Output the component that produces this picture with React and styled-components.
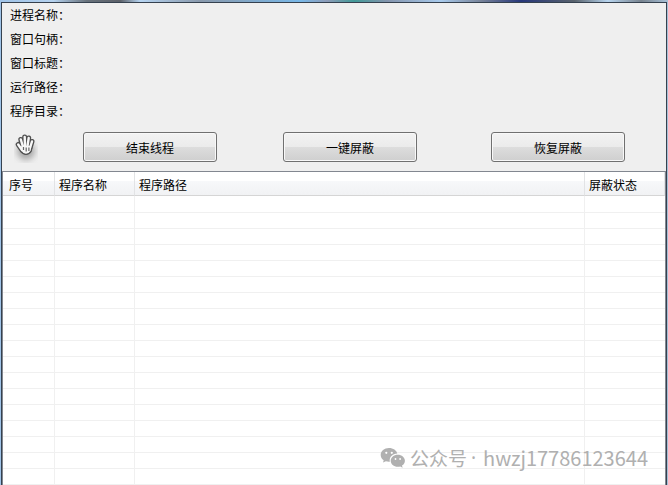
import styled, { createGlobalStyle } from 'styled-components';

const fields = ['进程名称', '窗口句柄', '窗口标题', '运行路径', '程序目录'];
const actions = ['结束线程', '一键屏蔽', '恢复屏蔽'];
const columns = [
  { title: '序号', width: '52px' },
  { title: '程序名称', width: '80px' },
  { title: '程序路径' },
  { title: '屏蔽状态', width: '80px' },
];
const emptyRows = Array.from({ length: 18 }, (_, i) => i);

const fingers = 'M4.200 13.500L8 19M6.800 8.500L9 16M10.700 6L11 15M14.700 7L13.500 15M18 10.500L16 17';
const palm = 'M7.500 16L16.500 15.500L16 19.500Q14.500 22 12 22Q9.500 22 8 19.500Z';

function HandIcon() {
  return (
    <svg width="24" height="32" viewBox="0 0 24 32" aria-hidden="true">
      <defs>
        <filter id="soft" x="-50%" y="-50%" width="200%" height="200%">
          <feGaussianBlur stdDeviation="3" />
        </filter>
      </defs>
      <ellipse cx="12" cy="20" rx="9" ry="9" fill="#777" opacity="0.6" filter="url(#soft)" />
      <g fill="none" strokeLinecap="round" strokeLinejoin="round">
        <path d={fingers} stroke="#505050" strokeWidth="5" />
        <path d={palm} fill="#505050" stroke="#505050" strokeWidth="4" />
        <path d={fingers} stroke="#f8f8f8" strokeWidth="2.400" />
        <path d={palm} fill="#f8f8f8" stroke="#f8f8f8" strokeWidth="1.400" />
      </g>
      <path d="M9.500 16V19M12.200 16.500V20.500M14.900 16.500V20" stroke="#666" strokeWidth="1.200" />
    </svg>
  );
}

function WechatIcon() {
  return (
    <svg width="26" height="22" viewBox="0 0 26 22" aria-hidden="true">
      <path
        fill="#b0b0b0"
        d="M9 1C4.3 1 .7 4 .7 7.9c0 2.2 1.1 4 3 5.3L3 15.6l2.9-1.4c1 .3 2 .5 3.1.5h.8C9 10.3 12.500 6.600 17.300 6.600C16.600 3.400 13.200 1 9 1Z"
      />
      <path
        fill="#b0b0b0"
        d="M17.800 7.700c-4 0-7.100 2.700-7.100 6s3.100 6.100 7.100 6.100c.9 0 1.700-.1 2.500-.4l2.300 1.300-.6-2.100c1.800-1.100 2.900-2.900 2.900-4.900 0-3.300-3.200-6-7.100-6Z"
      />
      <g fill="#fff">
        <circle cx="6.300" cy="5.800" r="1.100" />
        <circle cx="11.800" cy="5.800" r="1.100" />
        <circle cx="15.500" cy="12" r="0.900" />
        <circle cx="20.100" cy="12" r="0.900" />
      </g>
    </svg>
  );
}

function App() {
  return (
    <Desktop>
      <GlobalStyle />
      <Window>
        <Info>
          {fields.map((name) => (
            <InfoRow key={name}>
              <dt>{name}：</dt>
              <dd />
            </InfoRow>
          ))}
        </Info>
        <Toolbar>
          <Picker>
            <HandIcon />
          </Picker>
          {actions.map((name) => (
            <ActionButton key={name} type="button">
              {name}
            </ActionButton>
          ))}
        </Toolbar>
        <ListView>
          <Table>
            <colgroup>
              {columns.map((column) => (
                <Column key={column.title} $width={column.width} />
              ))}
            </colgroup>
            <thead>
              <tr>
                {columns.map((column) => (
                  <HeaderCell key={column.title}>{column.title}</HeaderCell>
                ))}
              </tr>
            </thead>
            <tbody>
              {emptyRows.map((row) => (
                <tr key={row}>
                  {columns.map((column) => (
                    <Cell key={column.title} />
                  ))}
                </tr>
              ))}
            </tbody>
          </Table>
        </ListView>
      </Window>
      <Watermark>
        <WechatIcon />
        <span>公众号</span>
        <Dot>·</Dot>
        <Account>hwzj17786123644</Account>
      </Watermark>
    </Desktop>
  );
}

const GlobalStyle = createGlobalStyle`
  * {
    box-sizing: border-box;
  }
  body {
    margin: 0;
    background: #fff;
    color: #000;
    font: 12px/24px 'Noto Sans CJK SC', sans-serif;
  }
`;

const Desktop = styled.div`
  position: relative;
  min-height: 100vh;
  padding: 2px 1px 0;
  background: linear-gradient(
    90deg,
    #9fc3e8,
    #b5d2ef 8%,
    #68727c 13%,
    #5c6169 18%,
    #b7d5f2 21%,
    #8999ac 30%,
    #79b8e8 45%,
    #8d9cb8 49%,
    #429a98 53%,
    #8495ae 58%,
    #a9cbed 66%,
    #78849a 72%,
    #26377a 78%,
    #59636d 86%,
    #b8d5ef 91%,
    #77838f 96%,
    #a8c1d8
  );
`;

const Window = styled.main`
  min-height: calc(100vh - 2px);
  display: flex;
  flex-direction: column;
  border: 1px solid #35414f;
  border-bottom: none;
  background: #efefef;
`;

const Info = styled.dl`
  margin: 0;
  padding: 0 8px;
`;

const InfoRow = styled.div`
  display: flex;
  height: 24px;
  dd {
    flex: 1;
    margin: 0;
  }
`;

const Toolbar = styled.div`
  display: grid;
  grid-template-columns: 81px 200fr 208fr 175fr;
  align-items: center;
  height: 48px;
`;

const Picker = styled.div`
  display: flex;
  padding-left: 12px;
`;

const ActionButton = styled.button`
  width: 134px;
  height: 30px;
  padding: 2px 0 0;
  border: 1px solid #707070;
  border-radius: 3px;
  background: linear-gradient(#f2f2f2, #ebebeb 49%, #dddddd 50%, #cfcfcf);
  box-shadow: inset 0 0 0 1px #f8f8f8;
  color: #000;
  font: inherit;
  &:active {
    background: #d5d5d5;
  }
`;

const ListView = styled.section`
  flex: 1;
  border: 1px solid #828790;
  border-bottom: none;
  background: #fff;
`;

const Table = styled.table`
  width: 100%;
  table-layout: fixed;
  border-collapse: separate;
  border-spacing: 0;
  tbody tr:first-child td {
    height: 17px;
  }
`;

const Column = styled.col`
  width: ${({ $width }) => $width || 'auto'};
`;

const HeaderCell = styled.th`
  height: 24px;
  padding: 3px 4px 0;
  border-right: 1px solid #e2e3e5;
  border-bottom: 1px solid #d5d5d5;
  background: linear-gradient(#fff 40%, #f7f8fa 41%, #f1f2f4);
  font-weight: 400;
  line-height: 20px;
  text-align: left;
  &:first-child {
    padding-left: 6px;
  }
`;

const Cell = styled.td`
  height: 16px;
  padding: 0;
  border-right: 1px solid #f0f0f0;
  border-bottom: 1px solid #f0f0f0;
  &:last-child {
    border-right: none;
  }
`;

const Watermark = styled.div`
  position: absolute;
  right: 20px;
  bottom: 15px;
  display: flex;
  align-items: center;
  gap: 4px;
  color: #b0b0b0;
  font-size: 19px;
  pointer-events: none;
`;

const Dot = styled.span`
  width: 8px;
  font-family: 'Noto Sans', sans-serif;
`;

const Account = styled.span`
  font-size: 20px;
`;

export default App;
